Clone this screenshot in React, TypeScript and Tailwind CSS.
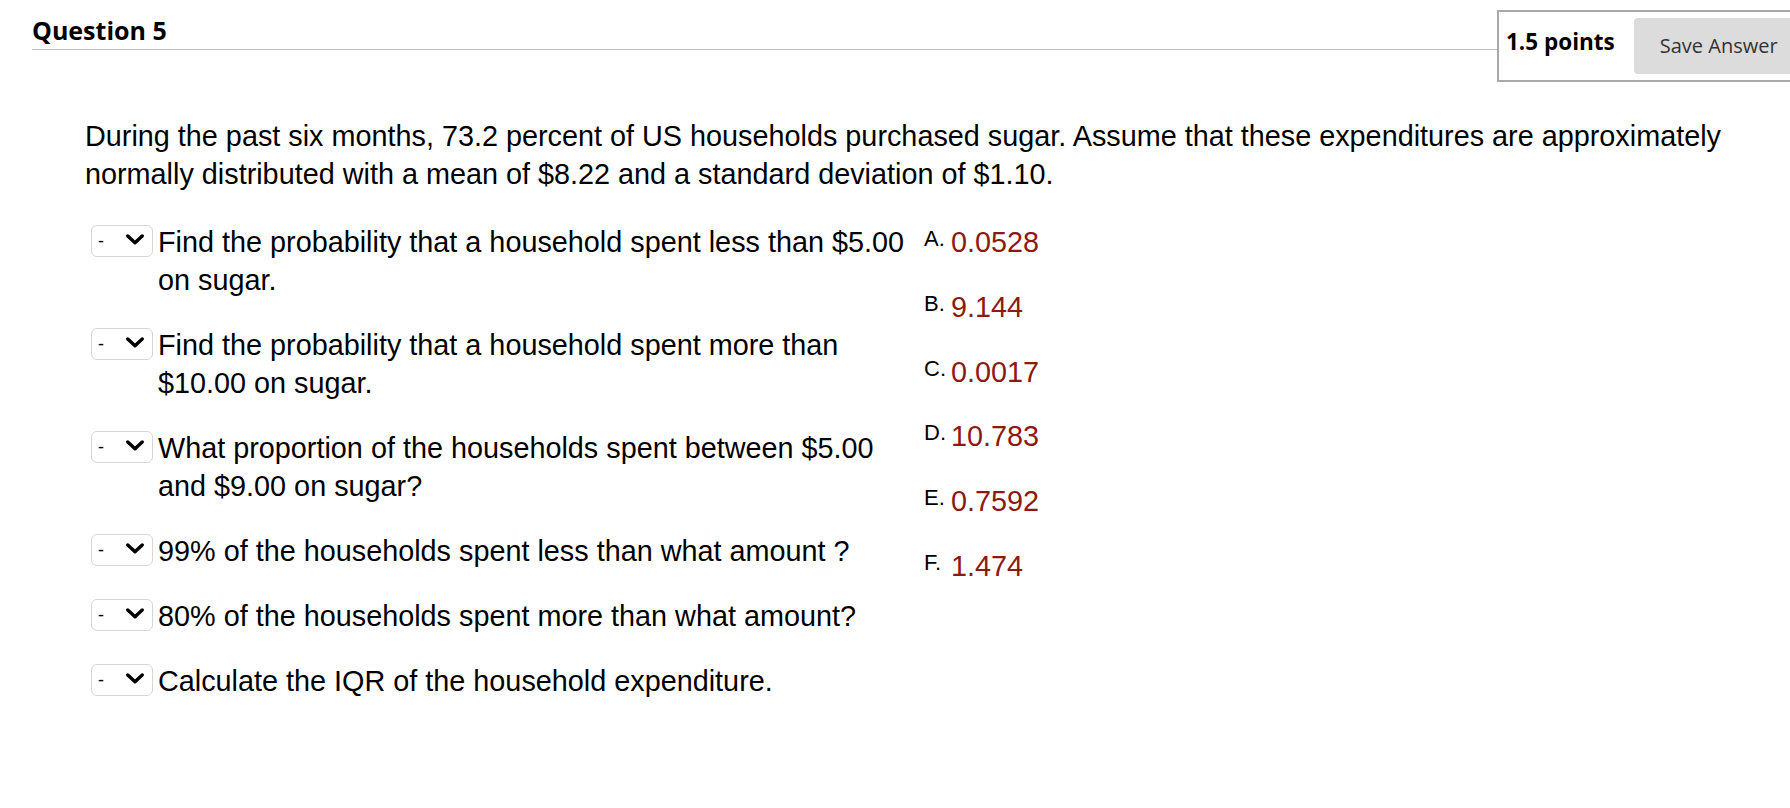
import React from "react";

const questions = [
  "Find the probability that a household spent less than $5.00 on sugar.",
  "Find the probability that a household spent more than $10.00 on sugar.",
  "What proportion of the households spent between $5.00 and $9.00 on sugar?",
  "99% of the households spent less than what amount ?",
  "80% of the households spent more than what amount?",
  "Calculate the IQR of the household expenditure.",
];

const answers = [
  { label: "A.", value: "0.0528" },
  { label: "B.", value: "9.144" },
  { label: "C.", value: "0.0017" },
  { label: "D.", value: "10.783" },
  { label: "E.", value: "0.7592" },
  { label: "F.", value: "1.474" },
];

function Dropdown() {
  return (
    <div className="mt-[2px] flex h-[32px] w-[62px] shrink-0 items-center rounded-[6px] border border-[#d6d6d6] bg-white pl-[6px]">
      <span className="text-[18px] leading-none">-</span>
      <svg
        className="-mt-[3px] ml-[20px]"
        width="22"
        height="12"
        viewBox="0 0 22 12"
      >
        <polyline
          points="3.8,2 11,8.8 18.2,2"
          fill="none"
          stroke="#000"
          strokeWidth="3.4"
          strokeLinecap="round"
          strokeLinejoin="round"
        />
      </svg>
    </div>
  );
}

export default function App() {
  return (
    <div className="h-[808px] w-[1790px] overflow-hidden bg-white font-['Liberation_Sans',Arial,sans-serif] text-black">
      {/* header */}
      <div className="flex pl-[32px] pt-[10px]">
        <div className="h-[40px] w-[1465px] shrink-0 border-b border-[#bdbdbd] pt-[1px]">
          <h2 className="font-['Open_Sans',sans-serif] text-[25px] font-bold leading-[38px] text-black">
            Question 5
          </h2>
        </div>
        <div className="flex h-[72px] shrink-0 items-center border-2 border-[#a9a9a9] pl-[7px] pr-[7px]">
          <span className="-mt-[9px] font-['Open_Sans',sans-serif] text-[22.5px] font-bold text-black">
            1.5 points
          </span>
          <button className="ml-[19px] h-[56px] rounded-[4px] bg-[#dcdcdc] px-[26px] font-['Open_Sans',sans-serif] text-[20px] text-[#333]">
            Save Answer
          </button>
        </div>
      </div>

      <p className="ml-[85px] mt-[35px] w-[1690px] text-[28.8px] leading-[38px]">
        During the past six months, 73.2 percent of US households purchased
        sugar. Assume that these expenditures are approximately normally
        distributed with a mean of $8.22 and a standard deviation of $1.10.
      </p>

      <div className="mt-[30px] flex pl-[91px]">
        <div className="w-[833px] shrink-0">
          {questions.map((q, i) => (
            <div key={i} className="flex items-start pb-[27px]">
              <Dropdown />
              <div className="ml-[5px] w-[752px] text-[28.8px] leading-[38px]">
                {q}
              </div>
            </div>
          ))}
        </div>
        <div>
          {answers.map((a) => (
            <div key={a.label} className="flex h-[64.8px] items-start">
              <span className="w-[27px] shrink-0 text-[22px] leading-[32px] text-black">
                {a.label}
              </span>
              <span className="text-[28.8px] leading-[38px] text-[#8c1a12]">
                {a.value}
              </span>
            </div>
          ))}
        </div>
      </div>
    </div>
  );
}
